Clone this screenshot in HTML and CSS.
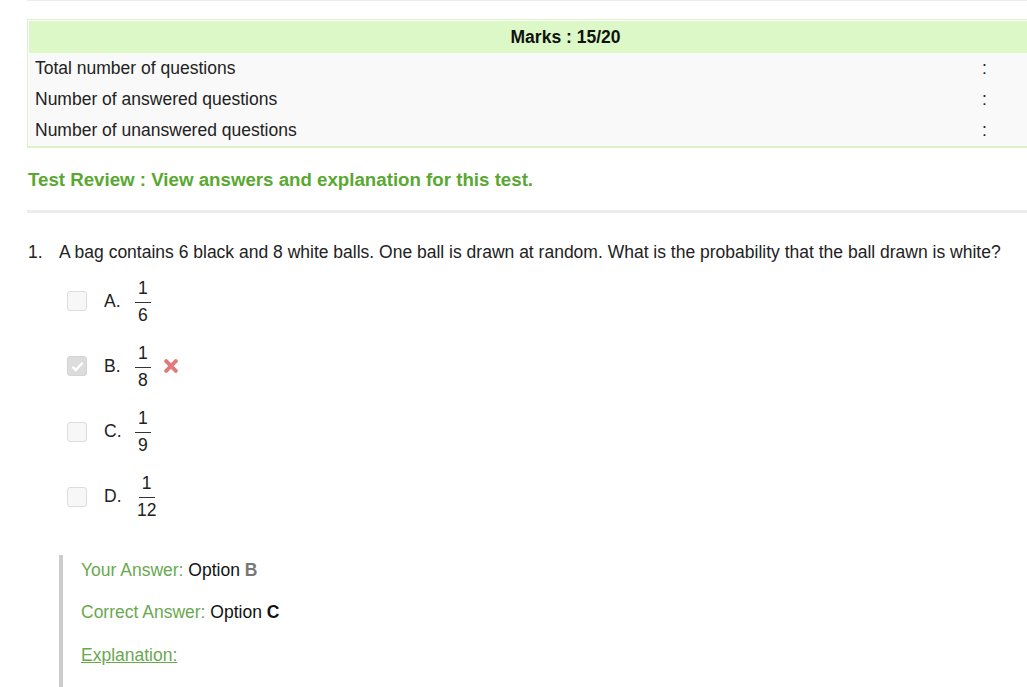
FILE: index.html
```html
<!DOCTYPE html>
<html>
<head>
<meta charset="utf-8">
<link rel="stylesheet" href="styles.css">
</head>
<body>
<div class="page">
  <div class="topline"></div>
  <div class="result">
    <div class="result-head">Marks : 15/20</div>
    <div class="result-row"><span class="lbl">Total number of questions</span><span class="colon">:</span><span class="val"></span></div>
    <div class="result-row"><span class="lbl">Number of answered questions</span><span class="colon">:</span><span class="val"></span></div>
    <div class="result-row"><span class="lbl">Number of unanswered questions</span><span class="colon">:</span><span class="val"></span></div>
  </div>
  <h2 class="review">Test Review : View answers and explanation for this test.</h2>
  <div class="divider"></div>
  <div class="question">
    <span class="qnum">1.</span>
    <span class="qtext">A bag contains 6 black and 8 white balls. One ball is drawn at random. What is the probability that the ball drawn is white?</span>
  </div>
  <div class="options">
    <div class="option">
      <span class="cb"></span><span class="olbl">A.</span>
      <span class="frac"><span class="num">1</span><span class="den">6</span></span>
    </div>
    <div class="option">
      <span class="cb checked"><svg width="13" height="11" viewBox="0 0 13 11"><path d="M1.5 5.8 L4.8 9 L11.5 1.8" fill="none" stroke="#fff" stroke-width="2.4"/></svg></span><span class="olbl">B.</span>
      <span class="frac"><span class="num">1</span><span class="den">8</span></span>
      <svg class="wrong" width="14" height="14" viewBox="0 0 14 14"><path d="M2.2 2.2 L11.8 11.8 M11.8 2.2 L2.2 11.8" stroke="#e07b7b" stroke-width="4" stroke-linecap="round"/></svg>
    </div>
    <div class="option">
      <span class="cb"></span><span class="olbl">C.</span>
      <span class="frac"><span class="num">1</span><span class="den">9</span></span>
    </div>
    <div class="option">
      <span class="cb"></span><span class="olbl">D.</span>
      <span class="frac"><span class="num">1</span><span class="den">12</span></span>
    </div>
  </div>
  <div class="answer">
    <p><span class="g">Your Answer:</span> Option <b class="yours">B</b></p>
    <p><span class="g">Correct Answer:</span> Option <b>C</b></p>
    <p><a class="g expl">Explanation:</a></p>
  </div>
</div>
</body>
</html>
```
FILE: styles.css
```css
html, body {
  margin: 0;
  padding: 0;
  background: #fff;
  overflow: hidden;
}
body {
  font-family: "Liberation Sans", Arial, sans-serif;
  font-size: 17.5px;
  color: #222;
}
.page {
  padding-left: 27px;
  width: 1080px;
}
.topline {
  height: 1px;
  background: #ececec;
  margin-bottom: 18px;
}
.result {
  border: 1px solid #dbf4c6;
  border-bottom: 2px solid #dbf4c6;
  padding: 1px 0 0 1px;
  width: 1076px;
  box-sizing: border-box;
}
.result-head {
  background: #dcf8c6;
  height: 32px;
  line-height: 32px;
  text-align: center;
  font-weight: bold;
  color: #111;
}
.result-row {
  display: grid;
  grid-template-columns: 950px 20px 1fr;
  background: #f9f9f9;
  height: 31px;
  line-height: 31px;
}
.lbl { padding-left: 6px; }
.colon { text-align: left; padding-left: 3px; }
.review {
  margin: 21px 0 0 1px;
  font-size: 18.7px;
  line-height: 22px;
  font-weight: bold;
  color: #5aa831;
}
.divider {
  height: 3px;
  background: #ededed;
  margin-top: 19px;
}
.question {
  display: flex;
  margin-top: 29px;
  line-height: 20px;
  color: #222;
}
.qnum { width: 31px; padding-left: 1px; }
.options {
  padding-left: 40px;
  margin-top: 18.5px;
}
.option {
  display: flex;
  align-items: center;
  height: 41px;
  margin-bottom: 24.3px;
}
.cb {
  width: 18px;
  height: 18px;
  border: 1px solid #dcdcdc;
  border-radius: 3px;
  background: #f7f7f7;
  box-sizing: content-box;
  display: flex;
  align-items: center;
  justify-content: center;
}
.cb.checked {
  background: #dcdcdc;
  border-color: #d4d4d4;
}
.olbl {
  margin-left: 17px;
  width: 31px;
}
.frac {
  display: inline-flex;
  flex-direction: column;
  align-items: center;
  line-height: 20px;
}
.num {
  padding: 0 3px 4px;
  border-bottom: 1px solid #333;
}
.den {
  padding: 2px 2px 0;
}
.wrong {
  margin-left: 13px;
}
.answer {
  margin-left: 32px;
  margin-top: 37.5px;
  border-left: 4px solid #cccccc;
  padding: 5px 0 20px 18px;
}
.answer p {
  margin: 0 0 22.5px 0;
  line-height: 20px;
  color: #111;
}
.g { color: #6aa84f; }
.yours { color: #777; }
.expl { text-decoration: underline; }
```
